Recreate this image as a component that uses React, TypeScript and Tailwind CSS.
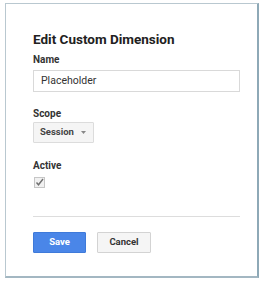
import React from "react";

export default function App() {
  return (
    <div className="w-[264px] h-[281px] bg-white pt-[3px] pl-[5px]" style={{ fontFamily: "Roboto, 'Liberation Sans', Arial, sans-serif" }}>
      <div className="w-[254px] h-[275px] border border-[#b9c8d0] border-r-2 border-b-2 border-r-[#8ea9b7] border-b-[#a3b7c2] bg-white pl-[27px] pr-[16px] pt-[27px]">
        <h1 className="text-[13.5px] leading-[16px] font-bold text-[#212121]">Edit Custom Dimension</h1>
        <div className="mt-[6px] text-[10px] leading-[14px] font-bold text-[#333]">Name</div>
        <div className="mt-[3px] w-[207px] h-[22px] border border-[#d9d9d9] flex items-center pl-[7px] text-[10.5px] text-[#333]">
          Placeholder
        </div>
        <div className="mt-[15px] text-[10px] leading-[14px] font-bold text-[#333]">Scope</div>
        <div className="mt-[1px] w-[61px] h-[21px] border border-[#dcdcdc] bg-[#f5f5f5] rounded-[1px] flex items-center justify-between pl-[6px] pr-[7px] text-[9.5px] font-bold text-[#444]">
          <span>Session</span>
          <svg width="5" height="3" viewBox="0 0 5 3"><path d="M0 0H5L2.5 3Z" fill="#888" /></svg>
        </div>
        <div className="mt-[16px] text-[10px] leading-[14px] font-bold text-[#333]">Active</div>
        <div className="mt-[4px] ml-[1px] w-[11px] h-[11px] border border-[#c6c6c6] bg-[#f1f1f1] flex items-center justify-center">
          <svg width="9" height="9" viewBox="0 0 9 9"><path d="M1.5 4.5L3.5 6.8L8 1" stroke="#707070" strokeWidth="1.4" fill="none" /></svg>
        </div>
        <div className="mt-[28px] w-[207px] h-px bg-[#dddddd]" />
        <div className="mt-[15px] flex gap-[11px]">
          <button className="w-[53px] h-[21px] bg-[#4a86e8] border border-[#3f7ad9] rounded-[1px] text-white text-[9.5px] font-bold">Save</button>
          <button className="w-[54px] h-[21px] bg-[#f5f5f5] border border-[#d3d3d3] rounded-[1px] text-[#333] text-[9.5px] font-bold">Cancel</button>
        </div>
      </div>
    </div>
  );
}
